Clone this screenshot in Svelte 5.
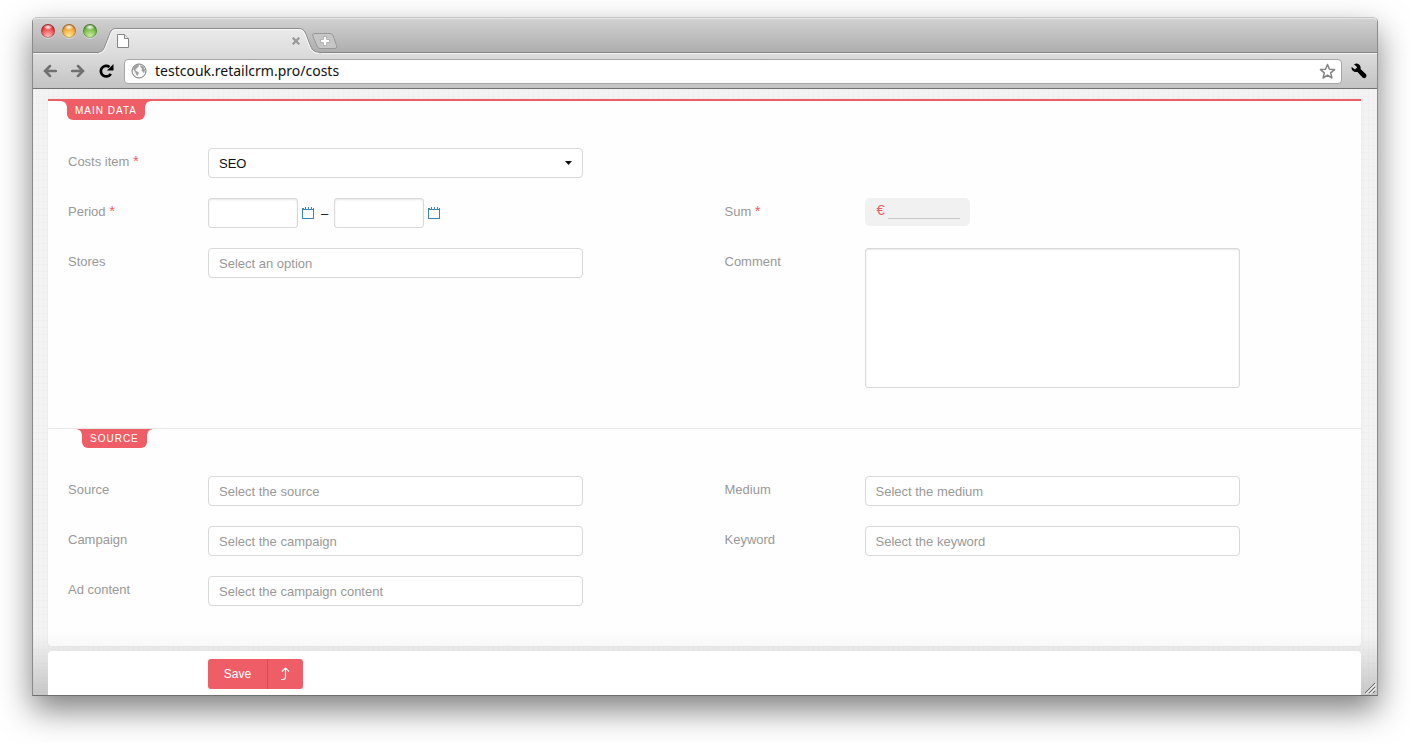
<script>
  const uid = $props.id();
  let item = $state('SEO');
  let url = $state('testcouk.retailcrm.pro/costs');
</script>

{#snippet calendar(label)}
  <button class="calendar" type="button" aria-label={label}>
    <svg width="12" height="12" viewBox="0 0 12 12" shape-rendering="crispEdges">
      <path d="M0 1h2v1h1V0h1v2h2V0h1v2h2V0h1v2h1V1h1v11H0zM1 3v8h10V3z" fill="#3a87ad" fill-rule="evenodd" />
    </svg>
  </button>
{/snippet}

{#snippet picker(label, placeholder)}
  <div class="row">
    <label for="{uid}-{label}">{label}</label>
    <input class="box" id="{uid}-{label}" type="text" {placeholder} />
  </div>
{/snippet}

<div class="window">
  <header class="titlebar">
    <div class="lights">
      <button class="light red" type="button" aria-label="Close window"></button>
      <button class="light amber" type="button" aria-label="Minimize window"></button>
      <button class="light green" type="button" aria-label="Zoom window"></button>
    </div>
    <div class="tab">
      <svg class="tab-shape" width="224" height="26" viewBox="0 0 224 26">
        <defs>
          <linearGradient id="tabfill" x1="0" y1="0" x2="0" y2="1">
            <stop offset="0" stop-color="#ebebeb" />
            <stop offset="1" stop-color="#dcdcdc" />
          </linearGradient>
        </defs>
        <path d="M0 26V24.5C5 24 6.500 22 8 18L13 5Q14.500 .5 19 .5H202Q206.500 .5 208.500 5L213.500 18C215.500 22.500 217 24 224 24.500V26Z" fill="url(#tabfill)" />
        <path d="M0 24.500C5 24 6.500 22 8 18L13 5Q14.500 .5 19 .5H202Q206.500 .5 208.500 5L213.500 18C215.500 22.500 217 24 224 24.500" fill="none" stroke="#8c8c8c" />
        <path d="M2 25.500C6 25 7.500 22.500 9 18.500L14 5.500Q15.500 1.500 19 1.500H202Q205.500 1.500 207.500 5.500L212.500 18.500C214.500 23 216.500 25 222 25.500" fill="none" stroke="#f8f8f8" />
      </svg>
      <svg class="page" width="12" height="14" viewBox="0 0 12 14">
        <path d="M.5 .5H7.500L11.500 4.500V13.500H.5Z" fill="#fff" stroke="#858585" />
        <path d="M7.500 .5V4.500H11.500" fill="#eee" stroke="#858585" />
      </svg>
      <button class="tab-close" type="button" aria-label="Close tab">
        <svg width="8" height="8" viewBox="0 0 8 8"><path d="M.7 .7L7.300 7.300M7.300 .7L.7 7.300" stroke="#999" stroke-width="2.200" /></svg>
      </button>
    </div>
    <button class="new-tab" type="button" aria-label="New tab">
      <svg width="26" height="16" viewBox="0 0 26 16">
        <path d="M2 .5H18Q20 .5 21 2.500L24.500 12.500Q25.500 15.500 23 15.500H8Q6 15.500 5 13L.8 3Q0 .5 2 .5Z" fill="#c6c6c6" stroke="#989898" />
        <path d="M11.500 3.500h3v3h3v3h-3v3h-3v-3h-3v-3h3z" fill="#fff" stroke="#a0a0a0" stroke-width=".7" />
      </svg>
    </button>
  </header>

  <nav class="toolbar">
    <button class="tool" type="button" aria-label="Back">
      <svg width="14" height="14" viewBox="0 0 14 14"><path d="M13 7H2M7 2L2 7L7 12" fill="none" stroke="#707070" stroke-width="2.500" stroke-linecap="round" /></svg>
    </button>
    <button class="tool" type="button" aria-label="Forward">
      <svg width="14" height="14" viewBox="0 0 14 14"><path d="M1 7H12M7 2L12 7L7 12" fill="none" stroke="#707070" stroke-width="2.500" stroke-linecap="round" /></svg>
    </button>
    <button class="tool" type="button" aria-label="Reload">
      <svg width="15" height="14" viewBox="0 0 15 14">
        <path d="M10.500 3A5.300 5.300 0 1 0 11.800 9.800" fill="none" stroke="#000" stroke-width="2.700" />
        <path d="M14.500 0V6.500H8Z" fill="#000" />
      </svg>
    </button>
    <div class="address">
      <svg width="16" height="16" viewBox="0 0 16 16">
        <circle cx="8" cy="8" r="7" fill="#fafafa" stroke="#777" />
        <path d="M3 3.500L6 1.800L8 2.300L7.500 4L5.500 5L5.800 6L4.200 6.500L5 8L7.800 9.300L7.200 11.500L6.200 13L5 11L3.800 8.500L2 6Z" fill="#a0a0a0" />
        <path d="M9.500 2L12.500 3.800L14 7L13 10.500L12 9L10.500 7.500L11 5.500L9.300 4Z" fill="#a0a0a0" />
      </svg>
      <input type="text" aria-label="Address" bind:value={url} />
      <button class="tool" type="button" aria-label="Bookmark">
        <svg width="17" height="17" viewBox="0 0 17 17"><path d="M8.500 1.500L10.500 6.200L15.500 6.600L11.700 9.900L12.900 15L8.500 12.200L4.100 15L5.300 9.900L1.500 6.600L6.500 6.200Z" fill="#fff" stroke="#858585" stroke-width="1.500" stroke-linejoin="round" /></svg>
      </button>
    </div>
    <button class="tool" type="button" aria-label="Settings">
      <svg width="16" height="16" viewBox="0 0 16 16"><path d="M3 1.200Q7-.5 9 2.500Q10 4.500 9.500 6L15 11.300Q16 13 14.800 14.500Q13.300 15.800 11.800 14.800L6.500 9Q3.500 9.500 1.500 7.500Q0 5.500 .8 4L4 6.500L6.200 4.300Z" fill="#000" /></svg>
    </button>
  </nav>

  <main class="page-body">
    <form class="card">
      <section class="main-data">
        <h2><span>Main data</span></h2>
        <div class="grid">
          <div class="column">
            <div class="row">
              <label for="{uid}-item">Costs item <b>*</b></label>
              <div class="select">
                <select class="box" id="{uid}-item" bind:value={item}>
                  <option>SEO</option>
                </select>
                <svg width="7" height="4" viewBox="0 0 7 4"><path d="M0 0H7L3.500 4Z" fill="#111" /></svg>
              </div>
            </div>
            <div class="row">
              <label for="{uid}-from">Period <b>*</b></label>
              <div class="period">
                <input class="box sunk" id="{uid}-from" type="text" />
                {@render calendar('Pick start date')}
                <span>–</span>
                <input class="box sunk" type="text" aria-label="Period end" />
                {@render calendar('Pick end date')}
              </div>
            </div>
            {@render picker('Stores', 'Select an option')}
          </div>
          <div class="column low">
            <div class="row">
              <label for="{uid}-sum">Sum <b>*</b></label>
              <div class="sum"><span>€</span><input id="{uid}-sum" type="text" /></div>
            </div>
            <div class="row">
              <label for="{uid}-comment">Comment</label>
              <textarea class="box sunk" id="{uid}-comment"></textarea>
            </div>
          </div>
        </div>
      </section>
      <section class="source">
        <h2><span>Source</span></h2>
        <div class="grid">
          <div class="column">
            {@render picker('Source', 'Select the source')}
            {@render picker('Campaign', 'Select the campaign')}
            {@render picker('Ad content', 'Select the campaign content')}
          </div>
          <div class="column">
            {@render picker('Medium', 'Select the medium')}
            {@render picker('Keyword', 'Select the keyword')}
          </div>
        </div>
      </section>
    </form>
    <footer class="actions">
      <button class="save" type="button">Save</button>
      <button class="save-back" type="button" aria-label="Save and return">
        <svg width="10" height="14" viewBox="0 0 10 14"><path d="M1 12.500H3Q5.500 12.500 5.500 10V1.500M2 4.500L5.500 1L9 4.500" fill="none" stroke="#fff" stroke-width="1.200" /></svg>
      </button>
    </footer>
    <svg class="grip" width="12" height="12" viewBox="0 0 12 12">
      <path d="M1 11L11 1M5 11L11 5M9 11L11 9" stroke="#666" />
      <path d="M2 12L12 2M6 12L12 6" stroke="#fff" stroke-width=".8" />
    </svg>
  </main>
</div>

<style>
  :global(body) {
    background: #fff;
  }
  .window {
    margin: 17px 32px 47px;
    border: 1px solid #8a8a8a;
    border-top-color: #c4c4c4;
    border-bottom-color: #6f6f6f;
    border-radius: 5px 5px 0 0;
    box-shadow: 0 14px 32px rgba(0, 0, 0, 0.5);
    font: 13px/20px "Liberation Sans", Arial, sans-serif;
  }
  button {
    margin: 0;
    padding: 0;
    border: 0;
    background: none;
    font: inherit;
  }
  svg {
    display: block;
  }
  .titlebar {
    display: flex;
    height: 34px;
    border-bottom: 1px solid #848484;
    border-radius: 4px 4px 0 0;
    background: linear-gradient(#d2d2d2, #aeaeae);
    box-shadow: inset 0 1px #e6e6e6;
  }
  .lights {
    display: flex;
    gap: 7px;
    padding: 6px 0 0 8px;
  }
  .light {
    width: 14px;
    height: 14px;
    border-radius: 50%;
    box-shadow: inset 0 0 2px rgba(0, 0, 0, 0.7), 0 1px rgba(255, 255, 255, 0.4);
  }
  .red {
    background: radial-gradient(ellipse 5px 3px at 50% 22%, #fff, transparent), radial-gradient(circle at 50% 90%, #ffc4c0, #ea3e40 60%, #a31015);
  }
  .amber {
    background: radial-gradient(ellipse 5px 3px at 50% 22%, #fff, transparent), radial-gradient(circle at 50% 90%, #fff09a, #f1a135 60%, #a85410);
  }
  .green {
    background: radial-gradient(ellipse 5px 3px at 50% 22%, #fff, transparent), radial-gradient(circle at 50% 90%, #d0f5a4, #6fb544 60%, #34701a);
  }
  .tab {
    position: relative;
    display: flex;
    justify-content: space-between;
    box-sizing: border-box;
    width: 224px;
    height: 26px;
    margin: 10px 0 0;
    padding: 6px 21px 0 20px;
  }
  .tab-shape {
    position: absolute;
    top: 0;
    left: 0;
  }
  .page,
  .tab-close {
    position: relative;
  }
  .tab-close {
    height: 14px;
  }
  .new-tab {
    height: 16px;
    margin: 15px 0 0 -9px;
    position: relative;
  }
  .toolbar {
    display: flex;
    align-items: center;
    gap: 14px;
    height: 34px;
    padding: 0 10px;
    border-top: 1px solid #f3f3f3;
    border-bottom: 1px solid #747474;
    background: linear-gradient(#dcdcdc, #c3c3c3);
  }
  .address {
    display: flex;
    flex: 1;
    align-items: center;
    gap: 8px;
    height: 23px;
    margin: 0 -5px 0 -4px;
    padding: 0 5px 0 6px;
    border: 1px solid #a6a6a6;
    border-radius: 4px;
    background: #fff;
  }
  .address input {
    flex: 1;
    min-width: 0;
    padding: 0;
    border: 0;
    outline: 0;
    background: none;
    color: #111;
    font: 14px/20px "Noto Sans", sans-serif;
  }
  .page-body {
    position: relative;
    padding: 10px 16px 0 15px;
    background:
      linear-gradient(transparent calc(100% - 60px), rgba(0, 0, 0, 0.18)),
      repeating-linear-gradient(90deg, rgba(0, 0, 0, 0.01) 0 1px, transparent 1px 5px),
      repeating-linear-gradient(rgba(0, 0, 0, 0.01) 0 1px, transparent 1px 7px),
      #f3f3f3;
  }
  .card {
    border-top: 2px solid #ef5e67;
    border-radius: 0 0 4px 4px;
    background: linear-gradient(#fefefe calc(100% - 16px), #f8f8f8);
    box-shadow: 0 0 3px rgba(0, 0, 0, 0.06);
  }
  section {
    padding-bottom: 40px;
  }
  .source {
    border-top: 1px solid #e8e8e8;
  }
  h2 {
    display: flex;
    height: 19px;
    margin: 0 0 28px;
    padding-left: 19px;
    color: #fff;
    font-size: 10px;
    font-weight: 400;
    line-height: 19px;
    letter-spacing: 1px;
    text-transform: uppercase;
  }
  .source h2 {
    padding-left: 34px;
  }
  h2 span {
    position: relative;
    padding: 0 8px;
    border-radius: 0 0 6px 6px;
    background: #ef5e67;
  }
  h2 span::before,
  h2 span::after {
    position: absolute;
    top: 0;
    width: 5px;
    height: 5px;
    content: "";
  }
  h2 span::before {
    right: 100%;
    background: radial-gradient(circle at 0 100%, transparent 4px, #ef5e67 5px);
  }
  h2 span::after {
    left: 100%;
    background: radial-gradient(circle at 100% 100%, transparent 4px, #ef5e67 5px);
  }
  .grid {
    display: grid;
    grid-template-columns: 1fr 1fr;
  }
  .column {
    display: flex;
    flex-direction: column;
    gap: 20px;
    padding-left: 20px;
  }
  .low {
    padding-top: 50px;
  }
  .row {
    display: grid;
    grid-template-columns: 140px minmax(0, 375px);
    min-height: 30px;
  }
  label {
    padding-top: 4px;
    color: #999;
  }
  label b {
    color: #ef5e67;
    font-size: 15px;
    font-weight: 400;
    line-height: 1;
  }
  .box {
    box-sizing: border-box;
    width: 100%;
    height: 30px;
    margin: 0;
    padding: 0 10px;
    border: 1px solid #d9d9d9;
    border-radius: 4px;
    outline: 0;
    background: #fff;
    color: #111;
    font: inherit;
  }
  .box::placeholder {
    color: #999;
    opacity: 1;
  }
  .sunk {
    border-radius: 3px;
    box-shadow: inset 0 1px 2px rgba(0, 0, 0, 0.1);
  }
  .select {
    position: relative;
  }
  select.box {
    padding-top: 1px;
    appearance: none;
  }
  .select svg {
    position: absolute;
    top: 13px;
    right: 11px;
    pointer-events: none;
  }
  .period {
    display: flex;
    align-items: center;
    height: 30px;
    color: #111;
  }
  .period .box {
    width: 90px;
  }
  .period span {
    margin: 2px 6px 0 7px;
  }
  .calendar {
    margin-left: 4px;
  }
  .sum {
    display: flex;
    box-sizing: border-box;
    width: 105px;
    height: 28px;
    padding: 2px 10px 6px 12px;
    border-radius: 5px;
    background: #f1f1f1;
    color: #ef5e67;
    font-size: 15px;
  }
  .sum span {
    flex: 1;
  }
  .sum input {
    box-sizing: border-box;
    width: 72px;
    height: 19px;
    padding: 0;
    border: 0;
    border-bottom: 1px solid #c8c8c8;
    outline: 0;
    background: none;
    font: inherit;
  }
  textarea.box {
    height: 140px;
    resize: none;
  }
  .actions {
    display: flex;
    margin-top: 5px;
    padding: 8px 0 6px 160px;
    border-radius: 4px 4px 0 0;
    background: #fff;
  }
  .save,
  .save-back {
    height: 30px;
    background: #ef5e67;
    color: #fff;
  }
  .save {
    width: 59px;
    border-radius: 3px 0 0 3px;
    font-size: 12px;
  }
  .save-back {
    display: grid;
    place-items: center;
    width: 36px;
    padding-right: 2px;
    border-left: 1px solid #d14e57;
    border-radius: 0 3px 3px 0;
  }
  .grip {
    position: absolute;
    right: 1px;
    bottom: 1px;
  }
</style>
